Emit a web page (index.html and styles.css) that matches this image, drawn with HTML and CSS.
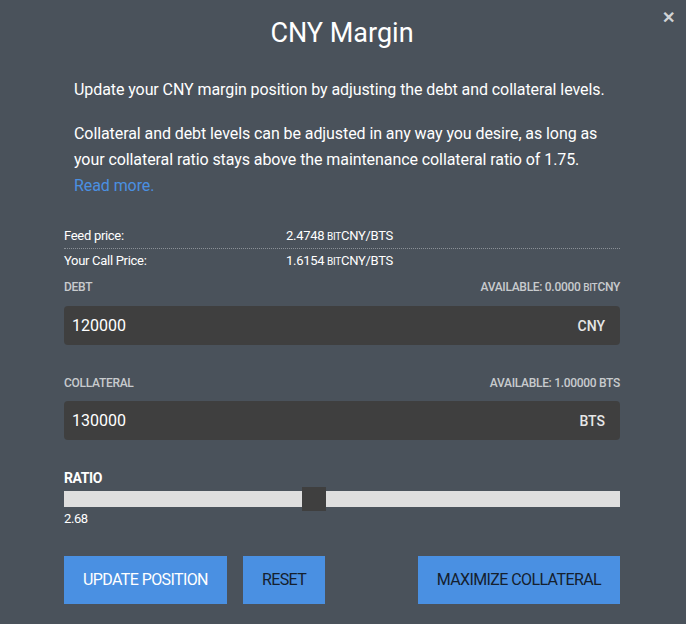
FILE: index.html
```html
<!DOCTYPE html>
<html>
<head>
<meta charset="UTF-8">
<title>CNY Margin</title>
<link rel="stylesheet" href="styles.css">
</head>
<body>

<div class="modal">
	<span class="closeBtn">&#x2715;</span>

	<h3 class="title">CNY Margin</h3>

	<div class="intro">
		<p>Update your CNY margin position by adjusting the debt and collateral levels.</p>
		<p>Collateral and debt levels can be adjusted in any way you desire, as long as your collateral ratio stays above the maintenance collateral ratio of 1.75.<br />
		<a href="#" class="readMore">Read more.</a></p>
	</div>

	<!-- 가격 정보 -->
	<div class="priceRow borderBottom">
		<span class="priceLabel">Feed price:</span>
		<span class="priceValue">2.4748 <small>bit</small>CNY/BTS</span>
	</div>
	<div class="priceRow">
		<span class="priceLabel">Your Call Price:</span>
		<span class="priceValue">1.6154 <small>bit</small>CNY/BTS</span>
	</div>

	<!-- 부채 -->
	<div class="fieldHead">
		<span>DEBT</span>
		<span>AVAILABLE: 0.0000 <small>bit</small>CNY</span>
	</div>
	<div class="amountBox">
		<span>120000</span>
		<span class="unit">CNY</span>
	</div>

	<!-- 담보 -->
	<div class="fieldHead">
		<span>COLLATERAL</span>
		<span>AVAILABLE: 1.00000 BTS</span>
	</div>
	<div class="amountBox">
		<span>130000</span>
		<span class="unit">BTS</span>
	</div>

	<!-- 비율 -->
	<div class="ratioLabel">RATIO</div>
	<div class="slider">
		<div class="thumb" style="left: 238px;"></div>
	</div>
	<div class="ratioValue">2.68</div>

	<div class="btnRow">
		<span class="btn btnPrimary">UPDATE POSITION</span>
		<span class="btn">RESET</span>
		<span class="btn btnRight">MAXIMIZE COLLATERAL</span>
	</div>
</div>

</body>
</html>
```

FILE: styles.css
```css
/* 기본 스타일 */
html, body {
	width: 100%;
	height: 100%;
	margin: 0;
	padding: 0;
	background: #4a525b;
	font-family: Roboto, "Liberation Sans", sans-serif;
	color: #fff;
}

.modal {
	position: relative;
	padding: 14px 66px 0 64px;
}

.closeBtn {
	position: absolute;
	top: 8px;
	right: 11px;
	font-size: 16px;
	font-weight: bold;
	color: #d0d3d6;
}

.title {
	margin: 0;
	text-align: center;
	font-size: 27px;
	font-weight: 400;
	line-height: 38px;
}

/* 안내 문구 */
.intro {
	padding: 25px 10px 0 10px;
	font-size: 16px;
	line-height: 26px;
	letter-spacing: -0.08px;
}
.intro p {
	margin: 0 0 18px 0;
}
.intro p:last-child {
	margin-bottom: 25px;
}
.readMore {
	color: #4a90e2;
	text-decoration: none;
}

/* 가격 정보 */
.priceRow {
	display: flex;
	font-size: 13px;
	line-height: 23px;
	letter-spacing: -0.3px;
}
.priceRow.borderBottom {
	border-bottom: 1px dotted #8a9097;
}
.priceLabel {
	width: 222px;
}
small {
	font-size: 10px;
	text-transform: uppercase;
}

.fieldHead {
	display: flex;
	justify-content: space-between;
	font-size: 12px;
	font-weight: 500;
	line-height: 16px;
	padding-top: 6px;
	color: #c8cbce;
	letter-spacing: -0.3px;
}

.amountBox {
	display: flex;
	justify-content: space-between;
	align-items: center;
	height: 39px;
	margin-top: 10px;
	margin-bottom: 24px;
	padding: 0 15px 0 8px;
	background: #3f3f3f;
	border-radius: 4px;
	font-size: 16px;
}
.amountBox .unit {
	font-size: 14px;
	font-weight: 500;
	color: #e6e6e6;
}

/* 비율 슬라이더 */
.ratioLabel {
	margin-top: 30px;
	font-size: 14px;
	font-weight: bold;
	line-height: 16px;
	letter-spacing: -0.4px;
}
.slider {
	position: relative;
	height: 16px;
	margin-top: 5px;
	background: #dedede;
}
.thumb {
	position: absolute;
	top: -4px;
	width: 24px;
	height: 24px;
	background: #3f3f3f;
}
.ratioValue {
	margin-top: 4px;
	font-size: 13px;
	line-height: 16px;
	letter-spacing: -0.4px;
}

/* 버튼 */
.btnRow {
	display: flex;
	gap: 16px;
	margin-top: 29px;
}
.btn {
	display: block;
	height: 48px;
	line-height: 48px;
	padding: 0 19px;
	background: #4a90e2;
	color: #15202e;
	font-size: 16px;
	letter-spacing: -0.6px;
	text-align: center;
}
.btnPrimary {
	color: #fff;
}
.btnRight {
	margin-left: auto;
}
```
